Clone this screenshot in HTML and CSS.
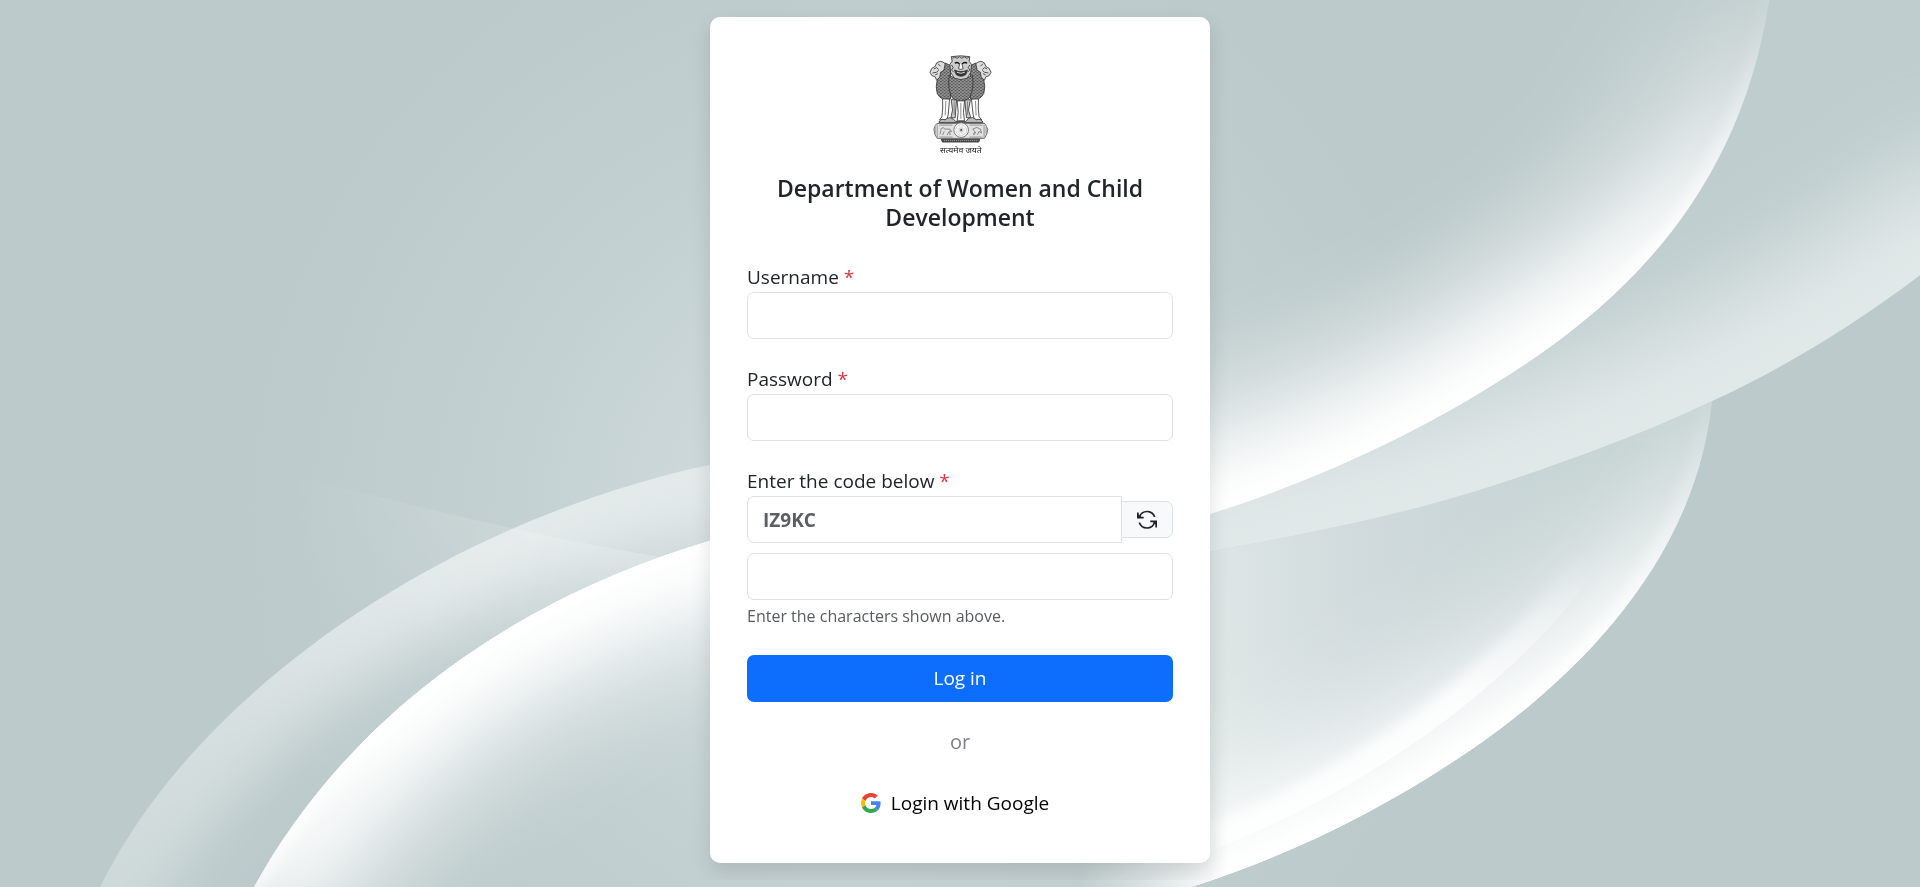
FILE: index.html
```html
<!DOCTYPE html>
<html lang="en">
<head>
<meta charset="utf-8">
<meta name="viewport" content="width=device-width, initial-scale=1">
<title>Log in</title>
<link rel="stylesheet" href="styles.css">
</head>
<body>
<svg class="backdrop" viewBox="0 0 1920 887" preserveAspectRatio="xMidYMid slice" aria-hidden="true">
  <defs>
    <filter id="soft" filterUnits="userSpaceOnUse" x="-200" y="-200" width="2400" height="1400"><feGaussianBlur stdDeviation="28"/></filter>
    <filter id="wide" filterUnits="userSpaceOnUse" x="-200" y="-200" width="2400" height="1400"><feGaussianBlur stdDeviation="46"/></filter>
    <filter id="edge" filterUnits="userSpaceOnUse" x="-200" y="-200" width="2400" height="1400"><feGaussianBlur stdDeviation="6"/></filter>
    <radialGradient id="centre" gradientUnits="userSpaceOnUse" cx="0" cy="0" r="1" gradientTransform="translate(850 520) scale(600 620)">
      <stop offset="0" stop-color="#dbe4e5"/><stop offset=".3" stop-color="#cbd7d9"/><stop offset=".6" stop-color="#c3d0d1"/><stop offset="1" stop-color="#bccacb"/>
    </radialGradient>
    <linearGradient id="fadeA" gradientUnits="userSpaceOnUse" x1="1560" y1="330" x2="1760" y2="20">
      <stop offset="0" stop-color="#fff"/><stop offset=".4" stop-color="#fff" stop-opacity=".7"/><stop offset="1" stop-color="#fff" stop-opacity=".1"/>
    </linearGradient>
    <linearGradient id="fadeC" gradientUnits="userSpaceOnUse" x1="1480" y1="740" x2="1710" y2="410">
      <stop offset="0" stop-color="#fff"/><stop offset=".45" stop-color="#fff" stop-opacity=".7"/><stop offset="1" stop-color="#fff" stop-opacity=".08"/>
    </linearGradient>
    <linearGradient id="fadeD" gradientUnits="userSpaceOnUse" x1="1460" y1="700" x2="1600" y2="570">
      <stop offset="0" stop-color="#fff"/><stop offset="1" stop-color="#fff" stop-opacity="0"/>
    </linearGradient>
    <linearGradient id="fadeL" gradientUnits="userSpaceOnUse" x1="380" y1="720" x2="250" y2="900">
      <stop offset="0" stop-color="#fff"/><stop offset="1" stop-color="#fff" stop-opacity=".5"/>
    </linearGradient>
    <linearGradient id="fadeO" gradientUnits="userSpaceOnUse" x1="440" y1="560" x2="90" y2="900">
      <stop offset="0" stop-color="#e4eaea"/><stop offset="1" stop-color="#d9e2e3" stop-opacity=".6"/>
    </linearGradient>
    <linearGradient id="fillC" gradientUnits="userSpaceOnUse" x1="1040" y1="560" x2="1640" y2="520">
      <stop offset="0" stop-color="#dfe7e6" stop-opacity="0"/><stop offset=".27" stop-color="#dfe7e6"/><stop offset=".52" stop-color="#d1dbdd"/><stop offset="1" stop-color="#c0cfcf"/>
    </linearGradient>
    <linearGradient id="faint" gradientUnits="userSpaceOnUse" x1="270" y1="480" x2="660" y2="560">
      <stop offset="0" stop-color="#fff" stop-opacity="0"/><stop offset="1" stop-color="#fff" stop-opacity=".22"/>
    </linearGradient>
    <linearGradient id="faintDown" gradientUnits="userSpaceOnUse" x1="480" y1="520" x2="440" y2="680">
      <stop offset="0" stop-color="#fff"/><stop offset="1" stop-color="#000"/>
    </linearGradient>
    <linearGradient id="leftFade" gradientUnits="userSpaceOnUse" x1="1080" y1="0" x2="1230" y2="0">
      <stop offset="0" stop-color="#000"/><stop offset="1" stop-color="#fff"/>
    </linearGradient>
    <mask id="faintMask"><rect width="1920" height="887" fill="url(#faintDown)"/></mask>
    <mask id="leftMask" maskUnits="userSpaceOnUse" x="0" y="0" width="1920" height="887"><rect width="1920" height="887" fill="url(#leftFade)"/></mask>
    <clipPath id="clipO"><path d="M94 900C182 705 430 525 709 465L960 430V900Z"/></clipPath>
    <clipPath id="clipL"><path d="M247 900C320 760 463 615 709 541L960 480V900Z"/></clipPath>
    <clipPath id="clipC"><path d="M900 965L1120 907C1245 877 1366 822 1475 747C1570 681 1701 561 1713 390V380H1200L900 500Z"/></clipPath>
    <clipPath id="clipD"><path d="M900 950L1120 880C1250 845 1360 785 1450 717C1510 670 1565 620 1600 560V380H900Z"/></clipPath>
    <clipPath id="clipB"><path d="M1130 567C1230 548 1310 534 1384 516C1440 503 1488 488 1540 470C1600 449 1655 428 1710 402C1790 365 1860 322 1940 260V-20H1130Z"/></clipPath>
    <clipPath id="clipA"><path d="M1130 536C1265 504 1415 441 1540 354C1650 277 1750 165 1772 -20H1130Z"/></clipPath>
  </defs>
  <rect width="1920" height="887" fill="url(#centre)"/>
  <g clip-path="url(#clipO)">
    <path d="M50 1000L94 900C182 705 430 525 709 465L960 430" fill="none" stroke="url(#fadeO)" stroke-width="120" filter="url(#soft)"/>
  </g>
  <path d="M270 468Q500 532 712 566V900H100Z" fill="url(#faint)" mask="url(#faintMask)"/>
  <g clip-path="url(#clipL)">
    <rect width="1920" height="887" fill="url(#centre)"/>
    <path d="M247 900C320 760 463 615 709 541L960 480" fill="none" stroke="#f4f7f7" stroke-opacity=".75" stroke-width="220" filter="url(#wide)"/>
    <path d="M247 900C320 760 463 615 709 541L960 480" fill="none" stroke="url(#fadeL)" stroke-width="100" filter="url(#soft)"/>
    <path d="M240 915L247 900C320 760 463 615 709 541L960 480" fill="none" stroke="url(#fadeL)" stroke-width="20" filter="url(#edge)"/>
  </g>
  <g mask="url(#leftMask)">
  <g clip-path="url(#clipC)">
    <path d="M1000 380H1730V905H1000Z" fill="url(#fillC)"/>
    <path d="M900 965L1120 907C1245 877 1366 822 1475 747C1570 681 1701 561 1713 390V380" fill="none" stroke="url(#fadeC)" stroke-opacity=".6" stroke-width="200" filter="url(#wide)"/>
    <path d="M900 965L1120 907C1245 877 1366 822 1475 747C1570 681 1701 561 1713 390V380" fill="none" stroke="url(#fadeC)" stroke-width="80" filter="url(#soft)"/>
    <g clip-path="url(#clipD)">
      <path d="M900 950L1120 880C1250 845 1360 785 1450 717C1510 670 1565 620 1600 560" fill="none" stroke="url(#fadeD)" stroke-opacity=".8" stroke-width="50" filter="url(#edge)"/>
    </g>
    <path d="M900 965L1120 907C1245 877 1366 822 1475 747C1570 681 1701 561 1713 390V380" fill="none" stroke="url(#fadeC)" stroke-width="24" filter="url(#edge)"/>
  </g>
  </g>
  <g clip-path="url(#clipB)">
    <rect width="1920" height="887" fill="#bfcdce"/>
    <path d="M1000 590L1130 567C1230 548 1310 534 1384 516C1440 503 1488 488 1540 470C1600 449 1655 428 1710 402C1790 365 1860 322 2020 210" fill="none" stroke="#e2e9e9" stroke-width="180" filter="url(#wide)"/>
  </g>
  <g clip-path="url(#clipA)">
    <rect width="1920" height="887" fill="url(#centre)"/>
    <path d="M1000 565L1130 536C1265 504 1415 441 1540 354C1650 277 1750 165 1772 -20" fill="none" stroke="url(#fadeA)" stroke-opacity=".65" stroke-width="220" filter="url(#wide)"/>
    <path d="M1000 565L1130 536C1265 504 1415 441 1540 354C1650 277 1750 165 1772 -20" fill="none" stroke="url(#fadeA)" stroke-width="90" filter="url(#soft)"/>
    <path d="M1130 536C1265 504 1415 441 1540 354C1650 277 1750 165 1772 -20" fill="none" stroke="url(#fadeA)" stroke-width="20" filter="url(#edge)"/>
  </g>
</svg>

<main class="page">
  <section class="card">
    <svg class="emblem" viewBox="80 40 200 310" role="img" aria-label="State Emblem of India">
      <defs>
        <pattern id="mane" width="11" height="9" patternUnits="userSpaceOnUse">
          <rect width="11" height="9" fill="#c4c4c4"/>
          <path d="M0 0L5.500 5L11 0M0 9L5.500 14M-1 8L0 9L5.500 5M5.500 5L11 9" fill="none" stroke="#111" stroke-width="2"/>
        </pattern>
      </defs>
      <g stroke="#333" stroke-width="2.500" stroke-linejoin="round" fill="#fff">
        <path d="M134 70L150 78V178Q122 186 110 162Q104 140 110 122L118 98Z" fill="url(#mane)"/>
        <path d="M226 70L210 78V178Q238 186 250 162Q256 140 250 122L242 98Z" fill="url(#mane)"/>
        <path d="M146 108Q180 128 216 108Q222 150 206 176Q181 192 156 176Q140 150 146 108Z" fill="url(#mane)"/>
        <path d="M134 72Q120 60 108 70L104 80L94 86L88 98L94 108L104 112L108 122L118 112L120 98L130 92Z" fill="#ddd"/>
        <path d="M226 72Q240 60 252 70L256 80L266 86L272 98L266 108L256 112L252 122L242 112L240 98L230 92Z" fill="#ddd"/>
        <path d="M100 88L108 84L114 90M96 100L108 98L114 92M104 106L112 102M260 88L252 84L246 90M264 100L252 98L246 92M256 106L248 102M112 72L120 80M248 72L240 80" fill="none"/>
        <path d="M152 51Q180 46 208 51L206 65L213 74L211 98L200 116Q181 124 162 116L150 98L148 74L155 65Z" fill="#ccc"/>
        <path d="M156 56L163 52L170 56L177 51L184 56L191 51L199 56L205 53M153 76L158 84L153 91L160 98M208 76L203 84L208 91L201 98" fill="none"/>
        <path d="M163 71Q170 65 177 73M185 73Q192 65 200 71" fill="none" stroke="#111" stroke-width="4"/>
        <path d="M178 72L174 87Q181 92 188 87L184 72" fill="#fff"/>
        <path d="M162 91Q181 101 201 91L196 105Q181 115 167 105Z" fill="#333"/>
        <path d="M169 98Q181 104 193 98" fill="none" stroke="#fff"/>
        <path d="M126 178Q128 206 124 232L117 241H139L143 226L147 179ZM234 178Q232 206 236 232L244 241H222L218 226L213 179Z"/>
        <path d="M152 180L156 212L151 235H164L168 182ZM210 180L204 212L211 235H198L193 182Z" fill="#ccc"/>
        <path d="M170 184L173 218L170 244H192L189 218L192 184Z"/>
        <path d="M136 184L134 228M225 184L227 228M161 186V226M201 186V226M181 190V238" fill="none" stroke="#777"/>
        <path d="M115 249Q119 236 133 241Q147 230 158 239L166 246H196L205 236Q217 230 228 241Q242 236 248 249Z" fill="#bbb"/>
        <path d="M109 252H253Q258 260 262 270Q262 283 252 297H110Q99 284 100 269Q102 258 109 252Z" fill="#e2e2e2" stroke="#555"/>
        <path d="M110 256V294M251 256V294M116 257H156M207 257H246M116 293H156M207 293H246M104 263V284M257 263V284" fill="none" stroke="#888"/>
        <path d="M119 270L128 264L132 269H148L153 276L147 275L149 287M145 277L140 287M131 276L126 287M122 271L118 285M219 285L223 277L217 269L229 264L240 269L243 281L236 276L231 286M226 278L220 287" fill="none" stroke="#777"/>
        <circle cx="182" cy="272" r="22" stroke="#666"/>
        <circle cx="182" cy="272" r="16" fill="none" stroke="#888" stroke-dasharray="2 2"/>
        <path d="M170 272H194M182 260V284M174 264L190 280M190 264L174 280M177 261L187 283M171 267L193 277M187 261L177 283M193 267L171 277" stroke="#999" stroke-width="1"/>
        <circle cx="182" cy="272" r="3" fill="#555" stroke="none"/>
        <path d="M122 300H238L235 308H126Z" fill="#444"/>
        <path d="M130 304H234" stroke="#ccc" stroke-dasharray="3 3"/>
      </g>
      <text class="motto" x="181" y="340" text-anchor="middle">सत्यमेव जयते</text>
    </svg>

    <h1 class="title">Department of Women and Child Development</h1>

    <form class="form">
      <div class="field">
        <label class="label" for="username">Username <span class="required">*</span></label>
        <input class="input" id="username" type="text">
      </div>
      <div class="field">
        <label class="label" for="password">Password <span class="required">*</span></label>
        <input class="input" id="password" type="password">
      </div>
      <div class="field">
        <label class="label" for="code">Enter the code below <span class="required">*</span></label>
        <div class="captcha">
          <input class="input captcha-code" type="text" value="IZ9KC" readonly aria-label="Code">
          <button class="refresh" type="button" aria-label="Refresh code">
            <svg class="refresh-icon" viewBox="0 0 20 20" aria-hidden="true">
              <path d="M2.500 7A8 8 0 0 1 17.700 7M17.500 12.500A8 8 0 0 1 2.300 12.500M.8 2.500V7.700H6.700M19.200 17.500V11.300H13.300" fill="none" stroke="currentColor" stroke-width="1.700"/>
              <path d="M1 4L5 8H1ZM19 15L15 11H19Z" fill="currentColor"/>
            </svg>
          </button>
        </div>
        <input class="input answer" id="code" type="text" aria-describedby="code-help">
        <p class="help" id="code-help">Enter the characters shown above.</p>
      </div>
      <button class="submit" type="submit">Log in</button>
    </form>

    <p class="or">or</p>
    <a class="google" href="#">
      <svg class="google-icon" viewBox="0 0 48 48" aria-hidden="true">
        <path fill="#EA4335" d="M24 9.500c3.540 0 6.710 1.220 9.210 3.600l6.850-6.850C35.900 2.380 30.470 0 24 0 14.620 0 6.510 5.380 2.560 13.220l7.980 6.190C12.430 13.720 17.740 9.500 24 9.500z"/>
        <path fill="#4285F4" d="M46.980 24.550c0-1.570-.15-3.090-.38-4.550H24v9.020h12.940c-.58 2.960-2.260 5.480-4.780 7.180l7.730 6c4.510-4.180 7.090-10.360 7.090-17.650z"/>
        <path fill="#FBBC05" d="M10.530 28.590c-.48-1.450-.76-2.990-.76-4.590s.27-3.140.76-4.590l-7.980-6.190C.92 16.460 0 20.120 0 24c0 3.880.92 7.540 2.560 10.780l7.970-6.190z"/>
        <path fill="#34A853" d="M24 48c6.480 0 11.930-2.130 15.890-5.810l-7.730-6c-2.150 1.450-4.920 2.300-8.160 2.300-6.260 0-11.570-4.220-13.470-9.910l-7.980 6.190C6.510 42.620 14.620 48 24 48z"/>
      </svg>
      <span>Login with Google</span>
    </a>
  </section>
</main>
</body>
</html>
```
FILE: styles.css
```css
*,
*::before,
*::after {
  box-sizing: border-box;
}

body {
  margin: 0;
  background: #bfcdce;
  color: #212529;
  font-family: "Segoe UI", "Open Sans", "Noto Sans", sans-serif;
  font-size: 19px;
  line-height: 29px;
}

.backdrop {
  position: fixed;
  inset: 0;
  width: 100%;
  height: 100%;
  z-index: -1;
}

.page {
  display: flex;
  justify-content: center;
  align-items: flex-start;
  padding: 17px 16px;
}

.card {
  display: flex;
  flex-direction: column;
  align-items: center;
  width: 100%;
  max-width: 500px;
  padding: 36px 37px 37px;
  border-radius: 10px;
  background: #fff;
  box-shadow: 0 8px 20px rgba(0, 0, 0, 0.12);
}

.emblem {
  width: 67px;
  height: 103px;
}

.motto {
  font-family: "Noto Sans", "Noto Sans Devanagari", sans-serif;
  font-size: 26px;
  fill: #222;
}

.title {
  margin: 18px 0 31px;
  font-size: 23px;
  font-weight: 600;
  line-height: 29px;
  text-align: center;
}

.form {
  display: flex;
  flex-direction: column;
  gap: 26px;
  width: 100%;
}

.field {
  display: flex;
  flex-direction: column;
}

.required {
  color: #dc3545;
}

.input {
  width: 100%;
  height: 47px;
  padding: 6px 15px;
  border: 1px solid #dee2e6;
  border-radius: 7px;
  background: #fff;
  color: #212529;
  font: inherit;
}

.captcha {
  display: flex;
  align-items: center;
}

.captcha-code {
  flex: 1;
  min-width: 0;
  border-radius: 7px 0 0 7px;
  color: #5c5f62;
  font-weight: 700;
}

.refresh {
  display: flex;
  justify-content: center;
  align-items: center;
  width: 52px;
  height: 37px;
  margin-left: -1px;
  padding: 0;
  border: 1px solid #dee2e6;
  border-radius: 0 7px 7px 0;
  background: #f8f9fa;
  color: #212529;
}

.refresh-icon {
  width: 20px;
  height: 20px;
}

.answer {
  margin-top: 10px;
}

.help {
  margin: 4px 0 0;
  color: #595c5f;
  font-size: 16px;
  line-height: 25px;
}

.submit {
  height: 47px;
  border: 0;
  border-radius: 7px;
  background: #0d6efd;
  color: #fff;
  font: inherit;
}

.or {
  margin: 25px 0 24px;
  color: #808386;
  font-size: 20px;
}

.google {
  display: flex;
  align-items: center;
  gap: 10px;
  height: 46px;
  margin-right: 10px;
  color: #000;
  text-decoration: none;
}

.google-icon {
  width: 20px;
  height: 20px;
}
```
